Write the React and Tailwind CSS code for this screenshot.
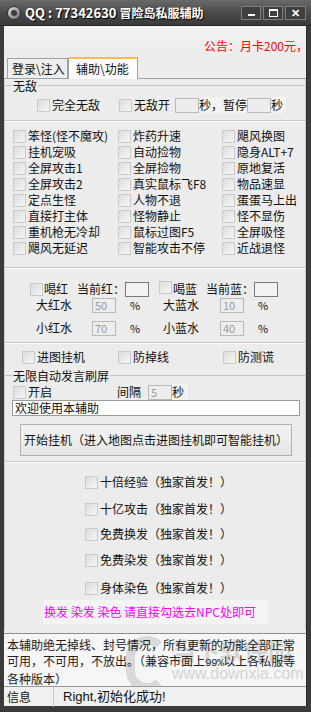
import React from 'react';

// 复选框（旧版 Windows 风格）
const Cb = () => (
  <span className="inline-block w-[13px] h-[13px] shrink-0 border border-[#cbcbcb] bg-gradient-to-br from-[#dcdcdc] to-[#f6f6f6]" />
);

const Check = ({ label, className = '' }) => (
  <div className={`flex items-center gap-[2px] h-[16px] ${className}`}>
    <Cb />
    <span className="whitespace-nowrap">{label}</span>
  </div>
);

const Sep = ({ className = '' }) => (
  <div className={`h-[2px] border-t border-t-[#c6c6c6] border-b border-b-white ${className}`} />
);

const Box = ({ value = '', dark = false }) => (
  <span
    className={`inline-flex items-center w-[24px] h-[15px] pl-[2px] text-[11px] border ${
      dark ? 'border-[#7a7a7a] bg-[#f2f2f2]' : 'border-[#b9b9b9] bg-[#ededed] text-[#9c9c9c]'
    }`}
  >
    {value}
  </span>
);

const col1 = ['笨怪(怪不魔攻)', '挂机宠吸', '全屏攻击1', '全屏攻击2', '定点生怪', '直接打主体', '重机枪无冷却', '飓风无延迟'];
const col2 = ['炸药升速', '自动捡物', '全屏捡物', '真实鼠标飞F8', '人物不退', '怪物静止', '鼠标过图F5', '智能攻击不停'];
const col3 = ['飓风换图', '隐身ALT+7', '原地复活', '物品速显', '蛋蛋马上出', '怪不显伤', '全屏吸怪', '近战退怪'];

const App = () => {
  return (
    <div className="w-[311px] h-[712px] bg-[#3b3b3b] flex flex-col text-[12px] leading-[16px] text-[#111] font-['Noto_Sans_CJK_SC',sans-serif] overflow-hidden">
      {/* 标题栏 */}
      <div className="h-[26px] shrink-0 flex items-center bg-gradient-to-b from-[#6a6a6a] via-[#4b4b4b] to-[#3a3a3a] border-b border-[#262626]">
        <div className="ml-[7px] w-[14px] h-[14px] rounded-full bg-gradient-to-br from-[#e6e6e6] to-[#6d6d6d] border border-[#2e2e2e] flex items-center justify-center">
          <span className="w-[6px] h-[6px] rounded-full bg-[#3c3c3c]" />
        </div>
        <span className="ml-[4px] text-white font-bold text-[13px] leading-[16px] whitespace-nowrap [text-shadow:1px_1px_1px_#000]">
          QQ : 77342630 <span className="text-[12px]">冒险岛私服辅助</span>
        </span>
        <div className="ml-auto mr-[5px] flex gap-[2px]">
          <div className="w-[20px] h-[14px] border border-[#7d7d7d] bg-[#3f3f3f] flex items-end justify-center pb-[3px]">
            <span className="w-[7px] h-[2px] bg-white" />
          </div>
          <div className="w-[20px] h-[14px] border border-[#7d7d7d] bg-[#3f3f3f] flex items-center justify-center">
            <span className="w-[9px] h-[8px] border border-white border-t-2" />
          </div>
          <div className="w-[21px] h-[14px] border border-[#7d7d7d] bg-[#3f3f3f] flex items-center justify-center text-white text-[11px] font-bold leading-none">
            ✕
          </div>
        </div>
      </div>

      {/* 客户区 */}
      <div className="mx-[4px] flex-1 flex flex-col bg-[#ececec] border-r border-[#2c2c2c]">
        {/* 公告 */}
        <div className="h-[31px] shrink-0 flex items-end pb-[3px] pl-[200px] overflow-hidden whitespace-nowrap bg-gradient-to-b from-[#f3f3f3] to-[#ececec] text-[#ff0000]">
          公告：月卡200元，
        </div>

        {/* 标签 */}
        <div className="h-[21px] shrink-0 flex items-end pl-[3px]">
          <div className="w-[61px] h-[20px] flex items-center pl-[4px] border border-b-0 border-[#9aa4ad] bg-[#eeeeee] whitespace-nowrap">
            登录\注入
          </div>
          <div className="relative z-10 -mb-px w-[70px] h-[22px] flex items-center pl-[7px] border-x border-[#9aa4ad] border-t-2 border-t-[#f4bf45] bg-white whitespace-nowrap">
            辅助\功能
          </div>
        </div>

        {/* 面板 */}
        <div className="shrink-0 h-[552px] flex flex-col border-t border-[#9aa4ad] border-x border-x-[#cfcfcf]">
          {/* 无敌 */}
          <div className="h-[13px] flex items-center">
            <span className="w-[7px] h-px bg-[#c4c4c4]" />
            <span className="px-[1px]">无敌</span>
            <span className="flex-1 h-px bg-[#c4c4c4]" />
          </div>
          <div className="mt-[5px] h-[16px] flex items-center pl-[32px]">
            <Check label="完全无敌" className="w-[82px]" />
            <Cb />
            <span className="ml-[2px] w-[41px]">无敌开</span>
            <Box dark={false} />
            <span className="w-[48px] bg-[#f3f3f3]">秒，暂停</span>
            <Box dark={false} />
            <span className="bg-[#f3f3f3] pr-[3px]">秒</span>
          </div>
          <Sep className="mt-[7px]" />

          {/* 功能勾选 */}
          <div className="mt-[6px] grid grid-cols-[105px_104px_1fr] pl-[8px]">
            {col1.map((a, i) => (
              <React.Fragment key={a}>
                <Check label={a} />
                <Check label={col2[i]} />
                <Check label={col3[i]} />
              </React.Fragment>
            ))}
          </div>
          <Sep className="mt-[11px]" />

          {/* 喝水 */}
          <div className="mt-[12px] h-[16px] flex items-center pl-[25px]">
            <Cb />
            <span className="ml-[1px] w-[33px]">喝红</span>
            <span className="w-[48px]">当前红：</span>
            <Box dark />
            <span className="ml-[10px]"><Cb /></span>
            <span className="ml-[1px] w-[33px]">喝蓝</span>
            <span className="w-[48px]">当前蓝：</span>
            <Box dark />
          </div>
          <div className="h-[16px] flex items-center pl-[31px]">
            <span className="w-[56px]">大红水</span>
            <Box value="50" />
            <span className="w-[47px] pl-[14px] text-[11px]">%</span>
            <span className="w-[57px]">大蓝水</span>
            <Box value="10" />
            <span className="pl-[14px] text-[11px]">%</span>
          </div>
          <div className="mt-[7px] h-[16px] flex items-center pl-[31px]">
            <span className="w-[56px]">小红水</span>
            <Box value="70" />
            <span className="w-[47px] pl-[14px] text-[11px]">%</span>
            <span className="w-[57px]">小蓝水</span>
            <Box value="40" />
            <span className="pl-[14px] text-[11px]">%</span>
          </div>
          <Sep className="mt-[6px]" />

          <div className="mt-[5px] flex pl-[17px]">
            <Check label="进图挂机" className="w-[96px]" />
            <Check label="防掉线" className="w-[105px]" />
            <Check label="防测谎" />
          </div>

          {/* 无限自动发言刷屏 */}
          <div className="mt-[4px] h-[13px] flex items-center">
            <span className="w-[7px] h-px bg-[#c4c4c4]" />
            <span className="px-[1px]">无限自动发言刷屏</span>
            <span className="flex-1 h-px bg-[#c4c4c4]" />
          </div>
          <div className="mt-[2px] h-[16px] flex items-center pl-[8px]">
            <Check label="开启" className="w-[104px]" />
            <span className="w-[31px]">间隔</span>
            <Box value="5" />
            <span className="bg-[#f3f3f3] pr-[4px]">秒</span>
          </div>
          <div className="ml-[7px] w-[288px] h-[16px] flex items-center pl-[2px] bg-white border border-[#9c9c9c]">
            欢迎使用本辅助
          </div>
          <button className="mt-[8px] ml-[15px] w-[272px] h-[32px] flex items-center justify-center bg-gradient-to-b from-[#f3f3f3] to-[#e6e6e6] border border-[#b0b0b0] whitespace-nowrap">
            开始挂机（进入地图点击进图挂机即可智能挂机）
          </button>
          <Sep className="mt-[5px]" />

          {/* 独家首发 */}
          <div className="flex flex-col pl-[80px]">
            <Check label="十倍经验（独家首发！）" className="mt-[11px]" />
            <Check label="十亿攻击（独家首发！）" className="mt-[11px]" />
            <Check label="免费换发（独家首发！）" className="mt-[9px]" />
            <Check label="免费染发（独家首发！）" className="mt-[10px]" />
            <Check label="身体染色（独家首发！）" className="mt-[12px]" />
          </div>
          <div className="mt-[4px] ml-[38px] w-[225px] h-[24px] flex items-center pl-[1px] bg-[#f4f4f4] text-[#ff00ff] whitespace-nowrap">
            换发 染发 染色 请直接勾选去NPC处即可
          </div>
        </div>

        {/* 说明 */}
        <div className="relative mt-[3px] h-[53px] shrink-0 pt-[3px] pl-[3px] bg-[#f6f6f6] border-t border-[#8e8e8e] text-[#222] overflow-hidden whitespace-nowrap">
          <div className="pointer-events-none absolute left-[122px] top-[2px] flex items-start gap-[4px] opacity-30 text-[#8a8a8a]">
            <span className="w-[42px] h-[56px] rounded-full border-[9px] border-[#9a9a9a] border-r-transparent" />
            <div className="flex flex-col">
              <span className="text-[24px] leading-[28px] font-bold">当下软件园</span>
              <span className="text-[16px] leading-[20px] font-['Liberation_Sans',sans-serif]">www.downxia.com</span>
            </div>
          </div>
          <div className="relative">本辅助绝无掉线、封号情况，所有更新的功能全部正常</div>
          <div className="relative">
            可用，不可用，不放出。（兼容市面上<span className="text-[11px] tracking-[-0.5px] font-['Liberation_Mono',monospace]">99%</span>以上各私服等
          </div>
          <div className="relative">各种版本）</div>
        </div>

        {/* 状态栏 */}
        <div className="h-[20px] shrink-0 flex items-center bg-[#f0f0f0] border-t border-[#9a9a9a]">
          <span className="pl-[3px] w-[49px]">信息</span>
          <span className="w-px h-[20px] bg-[#c8c8c8]" />
          <span className="pl-[9px] font-['Liberation_Sans','Noto_Sans_CJK_SC',sans-serif] text-[13px]">Right,初始化成功!</span>
        </div>
      </div>
      <div className="h-[6px] shrink-0" />
    </div>
  );
};

export default App;
